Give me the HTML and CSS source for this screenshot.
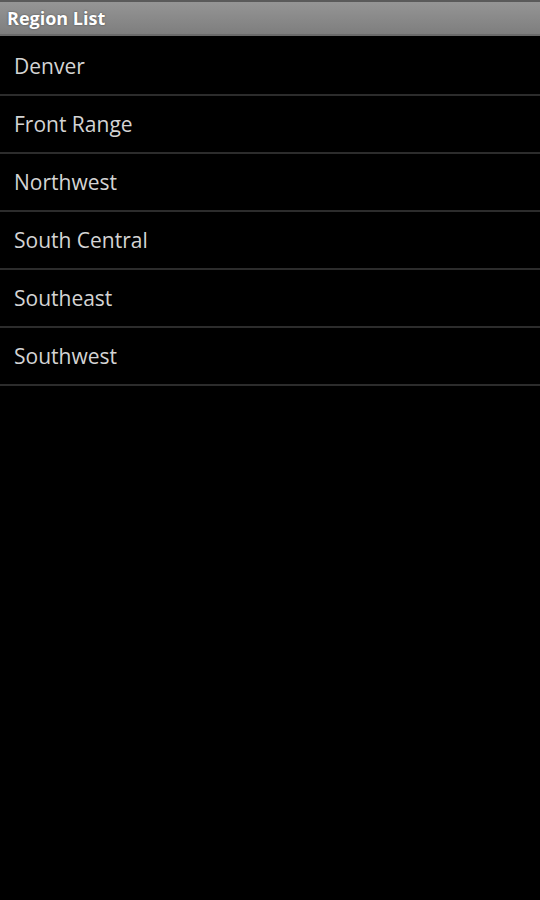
FILE: index.html
```html
<!DOCTYPE html>
<html>

<head>
    <meta charset="UTF-8" />
    <meta name="viewport" content="width=device-width" />
    <title>Region List</title>
    <link rel="stylesheet" href="styles.css">
</head>

<body>
    <div class="titlebar">Region List</div>

    <ul class="regions">
        <li>Denver</li>
        <li>Front Range</li>
        <li>Northwest</li>
        <li>South Central</li>
        <li>Southeast</li>
        <li>Southwest</li>
    </ul>
</body>

</html>
```

FILE: styles.css
```css
body {
    margin: 0;
    font-family: "Open Sans", "DejaVu Sans", sans-serif;
    background: #000;
    color: #d4d4d4;
    width: 540px;
    height: 900px;
    overflow: hidden;
}

.titlebar {
    height: 32px;
    line-height: 32px;
    padding-left: 7px;
    border-top: 2px solid #5a5a5a;
    border-bottom: 2px solid #6a6a6a;
    background: linear-gradient(#959595, #7e7e7e);
    color: #fff;
    font-size: 18px;
    font-weight: bold;
    text-shadow: 0 0 2px #444;
}

.regions {
    list-style: none;
    margin: 0;
    padding: 2px 0 0;
}

.regions li {
    height: 56px;
    line-height: 56px;
    padding-left: 14px;
    font-size: 21px;
    border-bottom: 2px solid #2c2c2c;
}
```
